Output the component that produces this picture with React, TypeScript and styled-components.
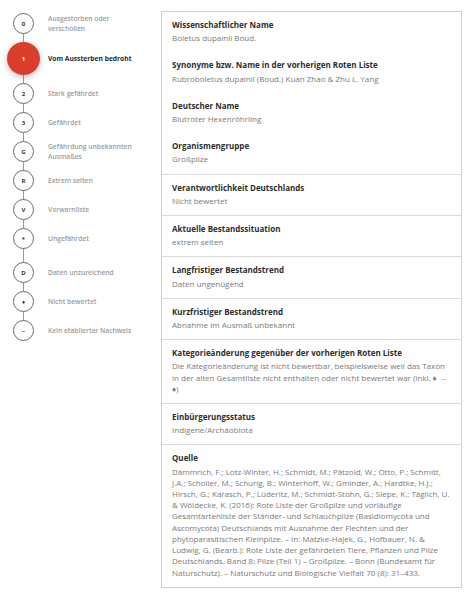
import React from "react";
import styled, { createGlobalStyle } from "styled-components";

const GlobalStyle = createGlobalStyle`
  body {
    margin: 0;
    background: #fff;
    font-family: "Open Sans", "Liberation Sans", sans-serif;
  }
`;

type Category = {
  code: string;
  label: string;
  active?: boolean;
  extra?: number;
};

const categories: Category[] = [
  { code: "0", label: "Ausgestorben oder verschollen" },
  { code: "1", label: "Vom Aussterben bedroht", active: true },
  { code: "2", label: "Stark gefährdet" },
  { code: "3", label: "Gefährdet" },
  { code: "G", label: "Gefährdung unbekannten Ausmaßes" },
  { code: "R", label: "Extrem selten" },
  { code: "V", label: "Vorwarnliste" },
  { code: "*", label: "Ungefährdet", extra: 5 },
  { code: "D", label: "Daten unzureichend" },
  { code: "♦", label: "Nicht bewertet" },
  { code: "–", label: "Kein etablierter Nachweis" },
];

type Field = { label: string; value: string };

const names: Field[] = [
  { label: "Wissenschaftlicher Name", value: "Boletus dupainii Boud." },
  {
    label: "Synonyme bzw. Name in der vorherigen Roten Liste",
    value: "Rubroboletus dupainii (Boud.) Kuan Zhao & Zhu L. Yang",
  },
  { label: "Deutscher Name", value: "Blutroter Hexenröhrling" },
  { label: "Organismengruppe", value: "Großpilze" },
];

const details: Field[] = [
  { label: "Verantwortlichkeit Deutschlands", value: "Nicht bewertet" },
  { label: "Aktuelle Bestandssituation", value: "extrem selten" },
  { label: "Langfristiger Bestandstrend", value: "Daten ungenügend" },
  { label: "Kurzfristiger Bestandstrend", value: "Abnahme im Ausmaß unbekannt" },
  {
    label: "Kategorieänderung gegenüber der vorherigen Roten Liste",
    value:
      "Die Kategorieänderung ist nicht bewertbar, beispielsweise weil das Taxon in der alten Gesamtliste nicht enthalten oder nicht bewertet war (inkl. ♦ → ♦)",
  },
  { label: "Einbürgerungsstatus", value: "Indigene/Archäobiota" },
  {
    label: "Quelle",
    value:
      "Dämmrich, F.; Lotz-Winter, H.; Schmidt, M.; Pätzold, W.; Otto, P.; Schmitt, J.A.; Scholler, M.; Schurig, B.; Winterhoff, W.; Gminder, A.; Hardtke, H.J.; Hirsch, G.; Karasch, P.; Lüderitz, M.; Schmidt-Stohn, G.; Siepe, K.; Täglich, U. & Wöldecke, K. (2016): Rote Liste der Großpilze und vorläufige Gesamtartenliste der Ständer- und Schlauchpilze (Basidiomycota und Ascomycota) Deutschlands mit Ausnahme der Flechten und der phytoparasitischen Kleinpilze. – In: Matzke-Hajek, G., Hofbauer, N. & Ludwig, G. (Bearb.): Rote Liste der gefährdeten Tiere, Pflanzen und Pilze Deutschlands. Band 8: Pilze (Teil 1) – Großpilze. – Bonn (Bundesamt für Naturschutz). – Naturschutz und Biologische Vielfalt 70 (8): 31–433.",
  },
];

export default function App() {
  return (
    <>
      <GlobalStyle />
      <Page>
        <Scale>
          {categories.map((c) => (
            <ScaleItem key={c.code} $extra={c.extra ?? 0}>
              <BadgeSlot>
                <Badge $active={!!c.active}>{c.code}</Badge>
              </BadgeSlot>
              <ScaleLabel $active={!!c.active}>{c.label}</ScaleLabel>
            </ScaleItem>
          ))}
        </Scale>
        <Panel>
          <Section>
            {names.map((f) => (
              <Entry key={f.label}>
                <Label>{f.label}</Label>
                <Value>{f.value}</Value>
              </Entry>
            ))}
          </Section>
          {details.map((f) => (
            <Section key={f.label}>
              <Entry>
                <Label>{f.label}</Label>
                <Value>{f.value}</Value>
              </Entry>
            </Section>
          ))}
        </Panel>
      </Page>
    </>
  );
}

const Page = styled.div`
  display: flex;
  align-items: flex-start;
  padding: 11px 0 0 0;
`;

const Scale = styled.ul`
  position: relative;
  list-style: none;
  margin: 0;
  padding: 2px 0 0 0;
  width: 161px;
  flex-shrink: 0;
  display: flex;
  flex-direction: column;
  gap: 8px;

  &::before {
    content: "";
    position: absolute;
    left: 23px;
    top: 14px;
    bottom: 10px;
    width: 1px;
    background: #9a9a9a;
  }
`;

const ScaleItem = styled.li<{ $extra: number }>`
  position: relative;
  display: flex;
  align-items: center;
  margin-bottom: ${(p) => p.$extra}px;
`;

const BadgeSlot = styled.div`
  width: 47px;
  flex-shrink: 0;
  display: flex;
  justify-content: center;
  padding-right: 1px;
`;

const Badge = styled.span<{ $active: boolean }>`
  width: ${(p) => (p.$active ? 33 : 21)}px;
  height: ${(p) => (p.$active ? 33 : 21)}px;
  border-radius: 50%;
  box-sizing: border-box;
  display: flex;
  align-items: center;
  justify-content: center;
  font-size: 6px;
  font-weight: 700;
  color: ${(p) => (p.$active ? "#fff" : "#333")};
  background: ${(p) => (p.$active ? "#db3d2b" : "#fff")};
  border: ${(p) => (p.$active ? "none" : "1px solid #6b6b6b")};
  box-shadow: ${(p) => (p.$active ? "0 2px 6px rgba(0,0,0,0.25)" : "none")};
  position: relative;
  z-index: 1;
`;

const ScaleLabel = styled.span<{ $active: boolean }>`
  font-size: 6.7px;
  line-height: 10px;
  font-weight: ${(p) => (p.$active ? 700 : 600)};
  color: ${(p) => (p.$active ? "#2b2b2b" : "#9b9b9b")};
  max-width: 88px;
`;

const Panel = styled.div`
  width: 301px;
  box-sizing: border-box;
  border: 1px solid #cfcfcf;
  background: #fff;
`;

const Section = styled.div`
  padding: 0 10px;
  border-bottom: 1px solid #dcdcdc;

  &:last-child {
    border-bottom: none;
  }
`;

const Entry = styled.div`
  padding: 7px 0 9px;
`;

const Label = styled.div`
  font-size: 8px;
  line-height: 11.2px;
  margin-bottom: 2px;
  font-weight: 700;
  color: #2e2e2e;
`;

const Value = styled.div`
  font-size: 8px;
  line-height: 11.2px;
  color: #7a7a7a;
`;
